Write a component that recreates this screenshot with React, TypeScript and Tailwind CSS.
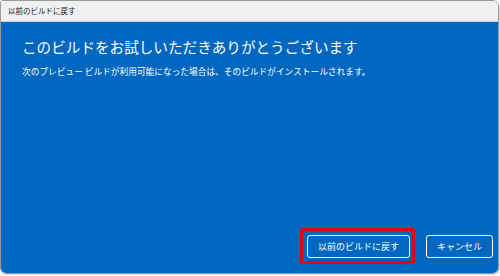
import React from "react";

export default function App() {
  const font = { fontFamily: '"Noto Sans CJK JP", "Noto Sans", sans-serif' };
  return (
    <div className="w-[500px] h-[276px] bg-white" style={font}>
      <div className="w-[499px] h-[274px] flex flex-col border border-[#9a9a9a] rounded-[6px] rounded-tl-[3px] overflow-hidden shadow-[1px_1px_1px_rgba(0,0,0,0.15)]">
        <div className="h-[21px] shrink-0 bg-[#f0f0f0] border-b border-[#c9d6e3] flex items-center pl-[7px]">
          <span className="text-[7.5px] leading-none text-[#1a1a1a]">以前のビルドに戻す</span>
        </div>
        <div className="flex-1 bg-[#0067c0] flex flex-col pl-[21px] pr-[5px] pt-[15px] pb-[15px] text-white">
          <h1 className="text-[14.6px] leading-[20px] font-normal">このビルドをお試しいただきありがとうございます</h1>
          <p className="mt-[9px] text-[8.7px] leading-[12px]">
            次のプレビュー ビルドが利用可能になった場合は、そのビルドがインストールされます。
          </p>
          <div className="mt-auto flex justify-end gap-[16px]">
            <button className="relative w-[103px] h-[23px] border border-white rounded-[3px] bg-[#0067c0] text-[9px] leading-none text-white">
              以前のビルドに戻す
              <span className="absolute -left-[8px] -right-[6px] -top-[8px] -bottom-[7px] border-[3px] border-[#e60012] rounded-[2px] pointer-events-none" />
            </button>
            <button className="w-[67px] h-[23px] border border-white rounded-[3px] bg-[#0067c0] text-[9px] leading-none text-white">
              キャンセル
            </button>
          </div>
        </div>
      </div>
    </div>
  );
}
